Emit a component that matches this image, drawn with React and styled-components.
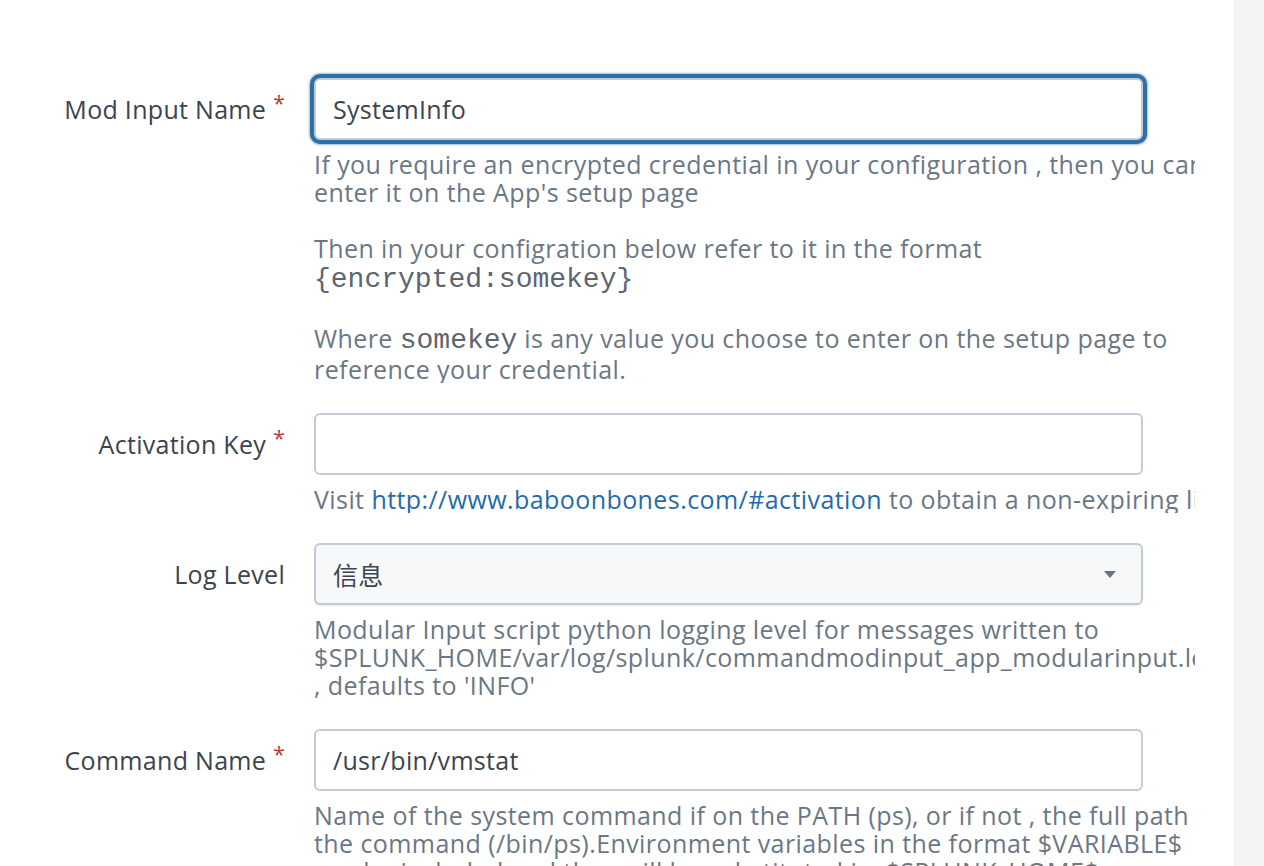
import React from 'react'
import styled, { createGlobalStyle } from 'styled-components'

const GlobalStyle = createGlobalStyle`
  html, body {
    margin: 0;
    padding: 0;
    background: #ffffff;
    font-family: "Open Sans", "Noto Sans", "Noto Sans CJK SC", sans-serif;
  }
`

const Page = styled.div`
  display: flex;
  height: 866px;
  overflow: hidden;
`

const Main = styled.div`
  flex: 1;
  display: flex;
`

const FormColumn = styled.div`
  width: 1195px;
  overflow: hidden;
  padding-top: 78px;
  display: flex;
  flex-direction: column;
  gap: 30px;
`

const SidePanel = styled.div`
  width: 30px;
  background: #f2f4f5;
`

const Row = styled.div`
  display: grid;
  grid-template-columns: 285px 829px;
  column-gap: 29px;
`

const Label = styled.label`
  height: 62px;
  display: flex;
  align-items: center;
  justify-content: flex-end;
  font-size: 25px;
  letter-spacing: 0.3px;
  color: #3c444d;
  white-space: nowrap;
`

const Required = styled.span`
  color: #b23a3a;
  font-size: 21px;
  line-height: 1;
  margin-left: 7px;
  position: relative;
  top: -6px;
`

const Control = styled.div`
  display: flex;
  flex-direction: column;
  gap: 10px;
  min-width: 0;
`

const Input = styled.div`
  box-sizing: border-box;
  height: 62px;
  border: 2px solid #c3cbd4;
  border-radius: 6px;
  background: ${p => (p.$select ? '#f7f8fa' : '#ffffff')};
  display: flex;
  align-items: center;
  justify-content: space-between;
  padding: 0 25px 0 17px;
  font-size: 25px;
  letter-spacing: 0.3px;
  color: #3c444d;
  box-shadow: ${p =>
    p.$focused
      ? '0 0 0 4px #2f6fa8, 0 0 2px 5px rgba(47, 111, 168, 0.45)'
      : p.$select
        ? '0 1px 1px rgba(0, 0, 0, 0.08)'
        : 'none'};
`

const Caret = styled.span`
  width: 0;
  height: 0;
  border-left: 6px solid transparent;
  border-right: 6px solid transparent;
  border-top: 7px solid #6b7480;
`

const Help = styled.div`
  width: 881px;
  overflow: hidden;
  font-size: 25px;
  letter-spacing: 0.42px;
  line-height: 28px;
  color: #6b7785;
  display: flex;
  flex-direction: column;
  gap: 28px;
`

const Para = styled.div`
  display: flex;
  flex-direction: column;
`

const Line = styled.div`
  white-space: nowrap;
`

const MonoLine = styled.div`
  white-space: nowrap;
  font-family: "Liberation Mono", "Courier New", monospace;
  font-size: 28px;
  letter-spacing: 0;
  line-height: 32px;
  margin-top: 2px;
  color: #5c6570;
`

const Mono = styled.span`
  font-family: "Liberation Mono", "Courier New", monospace;
  font-size: 28px;
  letter-spacing: 0;
  line-height: 28px;
  color: #5c6570;
`

const Link = styled.a`
  color: #1f6bad;
  text-decoration: none;
`

const Field = ({ label, required, children, help }) => (
  <Row>
    <Label>
      {label}
      {required && <Required>*</Required>}
    </Label>
    <Control>
      {children}
      <Help>{help}</Help>
    </Control>
  </Row>
)

const App = () => {
  return (
    <>
      <GlobalStyle />
      <Page>
        <Main>
          <FormColumn>
            <Field
              label="Mod Input Name"
              required
              help={
                <>
                  <Para>
                    <Line>If you require an encrypted credential in your configuration , then you can</Line>
                    <Line>enter it on the App's setup page</Line>
                  </Para>
                  <Para>
                    <Line>Then in your configration below refer to it in the format</Line>
                    <MonoLine>{'{encrypted:somekey}'}</MonoLine>
                  </Para>
                  <Para>
                    <Line>
                      Where <Mono>somekey</Mono> is any value you choose to enter on the setup page to
                    </Line>
                    <Line>reference your credential.</Line>
                  </Para>
                </>
              }
            >
              <Input $focused>SystemInfo</Input>
            </Field>

            <Field
              label="Activation Key"
              required
              help={
                <Line>
                  Visit <Link href="#">http://www.baboonbones.com/#activation</Link> to obtain a non-expiring license key
                </Line>
              }
            >
              <Input />
            </Field>

            <Field
              label="Log Level"
              help={
                <Para>
                  <Line>Modular Input script python logging level for messages written to</Line>
                  <Line>$SPLUNK_HOME/var/log/splunk/commandmodinput_app_modularinput.log</Line>
                  <Line>, defaults to 'INFO'</Line>
                </Para>
              }
            >
              <Input $select>
                <span>信息</span>
                <Caret />
              </Input>
            </Field>

            <Field
              label="Command Name"
              required
              help={
                <Para>
                  <Line>Name of the system command if on the PATH (ps), or if not , the full path to</Line>
                  <Line>the command (/bin/ps).Environment variables in the format $VARIABLE$</Line>
                  <Line>can be included and they will be substituted ie. $SPLUNK_HOME$</Line>
                </Para>
              }
            >
              <Input>/usr/bin/vmstat</Input>
            </Field>
          </FormColumn>
        </Main>
        <SidePanel />
      </Page>
    </>
  )
}

export default App
